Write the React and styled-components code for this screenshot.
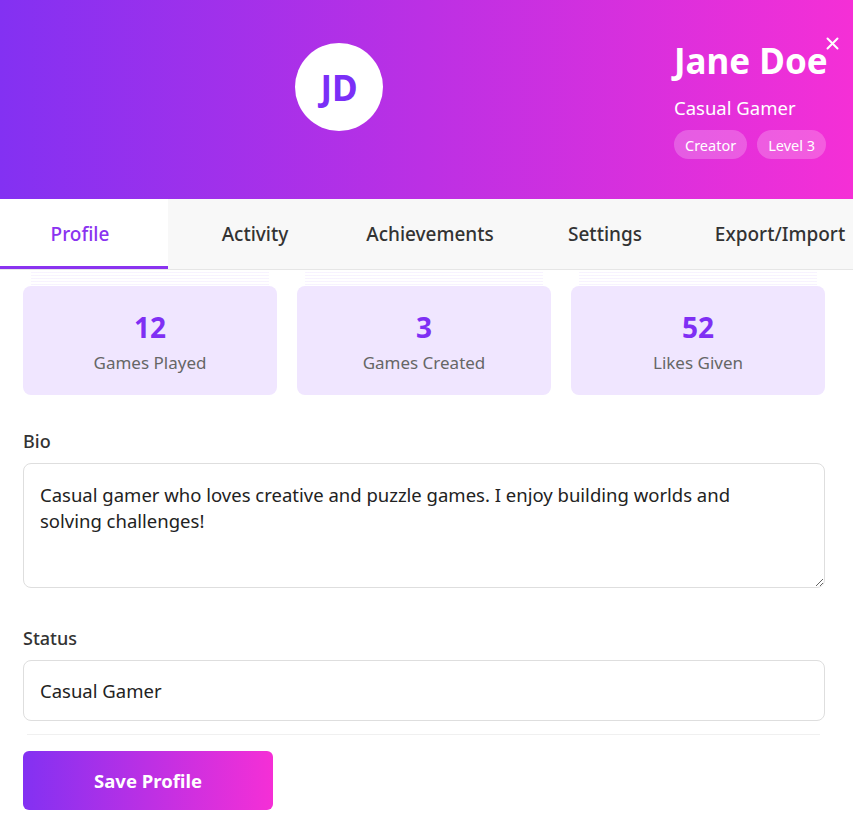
import React from "react";
import styled, { createGlobalStyle } from "styled-components";

const GlobalStyle = createGlobalStyle`
  * { box-sizing: border-box; }
  html, body { margin: 0; padding: 0; background: #fff; }
  body { font-family: "Noto Sans", "Open Sans", sans-serif; color: #333; overflow: hidden; }
`;

const Modal = styled.div`
  width: 853px;
  min-height: 822px;
  background: #fff;
  display: flex;
  flex-direction: column;
`;

const Header = styled.header`
  position: relative;
  height: 199px;
  background: linear-gradient(90deg, #8331f2 0%, #f52fd6 100%);
  display: flex;
  align-items: flex-start;
  padding: 41px 0 0 295px;
  gap: 291px;
  color: #fff;
`;

const Avatar = styled.div`
  width: 88px;
  height: 88px;
  margin-top: 2px;
  border-radius: 50%;
  background: #fff;
  color: #7b2ff7;
  display: flex;
  align-items: center;
  justify-content: center;
  font-size: 35px;
  font-weight: 700;
  flex-shrink: 0;
`;

const Info = styled.div`
  display: flex;
  flex-direction: column;
`;

const Name = styled.h1`
  margin: 0;
  font-size: 35px;
  font-weight: 700;
  line-height: 40px;
  white-space: nowrap;
`;

const Role = styled.div`
  margin-top: 15px;
  font-size: 18.5px;
  line-height: 24px;
`;

const Badges = styled.div`
  display: flex;
  gap: 10px;
  margin-top: 10px;
`;

const Badge = styled.span`
  background: rgba(255, 255, 255, 0.22);
  border-radius: 15px;
  padding: 0 11px;
  height: 29px;
  display: inline-flex;
  align-items: center;
  font-size: 14.5px;
  white-space: nowrap;
`;

const Close = styled.button`
  position: absolute;
  top: 34px;
  right: 12px;
  background: none;
  border: none;
  padding: 0;
  color: #fff;
  width: 18px;
  height: 18px;
  display: flex;
  align-items: center;
  justify-content: center;
  cursor: pointer;
`;

const TabBar = styled.nav`
  display: flex;
  gap: 7px;
  background: #f8f8f8;
  border-bottom: 1px solid #e6e6e6;
  overflow: hidden;
  height: 71px;
`;

const Tab = styled.button`
  flex: 0 0 168px;
  height: 70px;
  border: none;
  border-bottom: 3px solid ${(p) => (p.$active ? "#8a33f0" : "transparent")};
  background: ${(p) => (p.$active ? "#fff" : "transparent")};
  color: ${(p) => (p.$active ? "#8a33f0" : "#333")};
  font-family: inherit;
  font-size: 19px;
  font-weight: 500;
  padding: 3px 8px 0 0;
  white-space: nowrap;
  cursor: pointer;
`;

const Content = styled.main`
  padding: 16px 28px 0 23px;
  display: flex;
  flex-direction: column;
`;

const Stats = styled.div`
  display: grid;
  grid-template-columns: repeat(3, 1fr);
  gap: 20px;
`;

const StatCard = styled.div`
  position: relative;
  height: 109px;
  padding-top: 2px;
  background: #f0e6ff;
  border-radius: 8px;
  display: flex;
  flex-direction: column;
  align-items: center;
  justify-content: center;
  &::before {
    content: "";
    position: absolute;
    top: -14px;
    left: 8px;
    right: 8px;
    height: 13px;
    background: repeating-linear-gradient(
      180deg,
      rgba(240, 230, 255, 0.5) 0px,
      rgba(240, 230, 255, 0.5) 1px,
      transparent 1px,
      transparent 3px
    );
  }
`;

const StatValue = styled.div`
  font-size: 28px;
  font-weight: 700;
  color: #7f2ff4;
  line-height: 36px;
`;

const StatLabel = styled.div`
  margin-top: 6px;
  font-size: 17px;
  color: #666;
  line-height: 24px;
`;

const Field = styled.div`
  display: flex;
  flex-direction: column;
  margin-top: ${(p) => p.$top}px;
`;

const Label = styled.label`
  font-size: 18px;
  font-weight: 500;
  color: #333;
  line-height: 24px;
  margin-bottom: 10px;
`;

const TextArea = styled.textarea`
  height: 125px;
  border: 1px solid #dedede;
  border-radius: 8px;
  padding: 18px 40px 16px 16px;
  font-family: inherit;
  font-size: 18.5px;
  line-height: 26px;
  color: #222;
  resize: vertical;
  outline: none;
`;

const Input = styled.input`
  height: 61px;
  border: 1px solid #dedede;
  border-radius: 8px;
  padding: 0 16px;
  font-family: inherit;
  font-size: 18.5px;
  color: #222;
  outline: none;
`;

const Actions = styled.div`
  margin-top: 13px;
  border-top: 1px solid #f0f0f0;
  padding-top: 16px;
  margin-left: 4px;
  margin-right: 5px;
`;

const SaveButton = styled.button`
  margin-left: -4px;
  width: 250px;
  height: 59px;
  border: none;
  border-radius: 6px;
  background: linear-gradient(90deg, #8331f2 0%, #f52fd6 100%);
  color: #fff;
  font-family: inherit;
  font-size: 18.5px;
  font-weight: 700;
  cursor: pointer;
`;

const tabs = ["Profile", "Activity", "Achievements", "Settings", "Export/Import"];
const stats = [
  { value: 12, label: "Games Played" },
  { value: 3, label: "Games Created" },
  { value: 52, label: "Likes Given" },
];

export default function App() {
  return (
    <>
      <GlobalStyle />
      <Modal>
        <Header>
          <Avatar>JD</Avatar>
          <Info>
            <Name>Jane Doe</Name>
            <Role>Casual Gamer</Role>
            <Badges>
              <Badge>Creator</Badge>
              <Badge>Level 3</Badge>
            </Badges>
          </Info>
          <Close aria-label="Close">
            <svg width="13" height="13" viewBox="0 0 13 13">
              <path d="M1.5 1.5 L11.5 11.5 M11.5 1.5 L1.5 11.5" stroke="#fff" strokeWidth="2" strokeLinecap="round" />
            </svg>
          </Close>
        </Header>
        <TabBar>
          {tabs.map((t, i) => (
            <Tab key={t} $active={i === 0}>
              {t}
            </Tab>
          ))}
        </TabBar>
        <Content>
          <Stats>
            {stats.map((s) => (
              <StatCard key={s.label}>
                <StatValue>{s.value}</StatValue>
                <StatLabel>{s.label}</StatLabel>
              </StatCard>
            ))}
          </Stats>
          <Field $top={34}>
            <Label>Bio</Label>
            <TextArea defaultValue="Casual gamer who loves creative and puzzle games. I enjoy building worlds and solving challenges!" />
          </Field>
          <Field $top={38}>
            <Label>Status</Label>
            <Input defaultValue="Casual Gamer" />
          </Field>
          <Actions>
            <SaveButton>Save Profile</SaveButton>
          </Actions>
        </Content>
      </Modal>
    </>
  );
}
